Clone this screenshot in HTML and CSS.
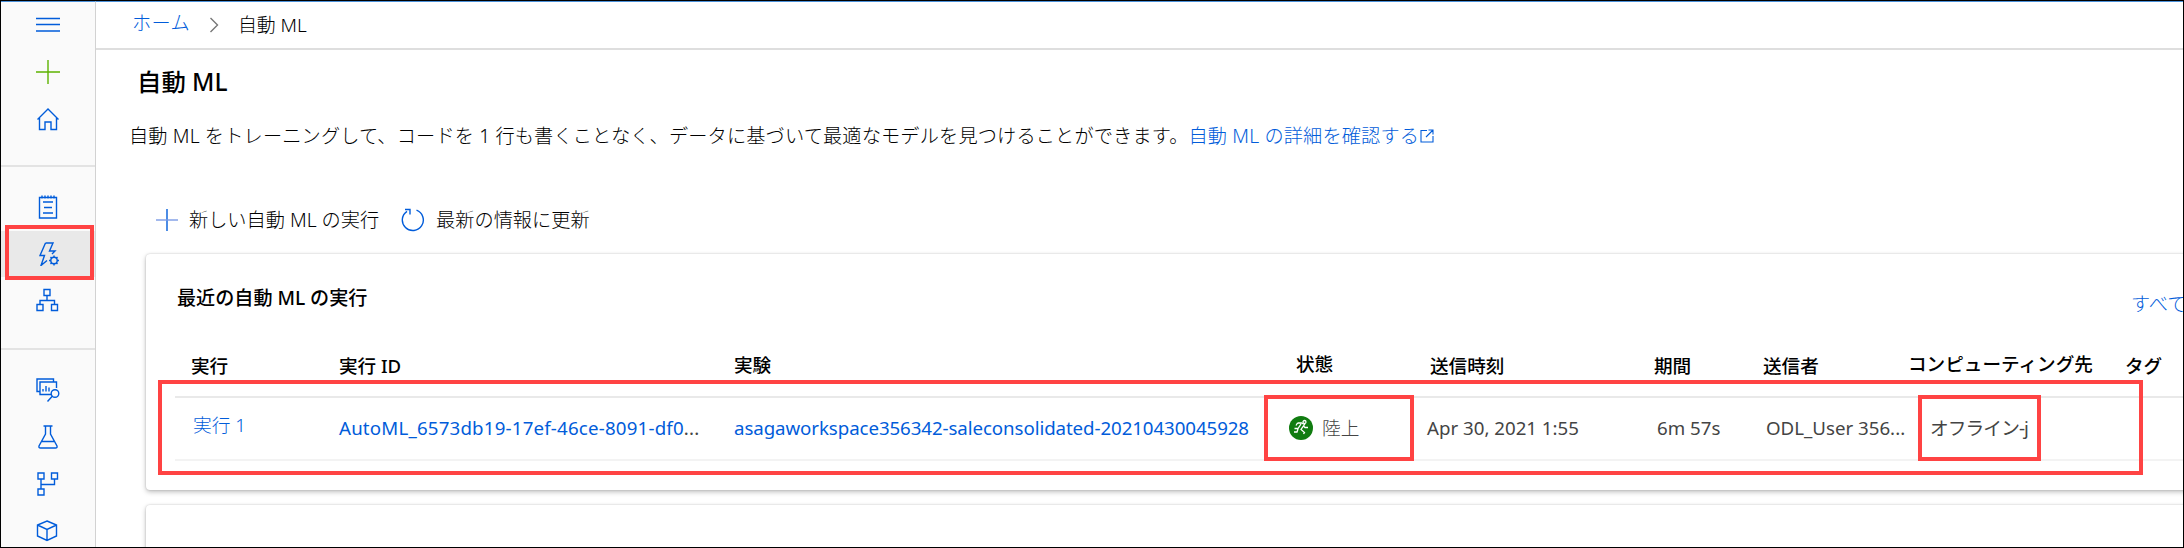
FILE: index.html
```html
<!DOCTYPE html>
<html lang="ja">
<head>
<meta charset="utf-8">
<title>自動 ML</title>
<link rel="stylesheet" href="styles.css">
</head>
<body>
<div class="app">
  <nav class="sidebar">
    <div class="nav-group nav-top">
      <a class="nav-item"><svg width="24" height="24" viewBox="0 0 24 24"><path d="M0 5.500h24M0 11.500h24M0 18h24"/></svg></a>
      <a class="nav-item add"><svg width="24" height="24" viewBox="0 0 24 24"><path d="M0 12h24M12 0v24"/></svg></a>
      <a class="nav-item"><svg width="24" height="24" viewBox="0 0 24 24"><path d="M1.500 12.500 12 2l10.500 10.500M3.500 11v11.500h5.500v-7.500h6v7.500h5.500V11"/></svg></a>
    </div>
    <div class="nav-group nav-author">
      <a class="nav-item"><svg width="24" height="24" viewBox="0 0 24 24"><path d="M3.500 2.500h17v20.500h-17zM7 7h10M8 12.500h8M7 18h10M6 .5v3M9 .5v3M12 .5v3M15 .5v3M18 .5v3"/></svg></a>
      <a class="nav-item selected"><svg width="24" height="24" viewBox="0 0 24 24"><path d="M9.500 1H17l-3.500 8H19l-3 3M9.500 1 4 13.500h4.500L5 23.500l6-5"/><circle cx="18" cy="18.500" r="3.200"/><path d="M18 13.500v2M18 21.500v2M13 18.500h2M21 18.500h2M14.500 15l1.300 1.300M20.200 20.700l1.300 1.300M21.500 15l-1.300 1.300M15.800 20.700 14.500 22"/></svg></a>
      <a class="nav-item"><svg width="24" height="24" viewBox="0 0 24 24"><path d="M8 1.500h6v6H8zM1 16.500h6v6H1zM15.500 16.500h6v6h-6zM11 7.500v5M4 16.500v-4h14.500v4"/></svg></a>
    </div>
    <div class="nav-group nav-assets">
      <a class="nav-item"><svg width="24" height="24" viewBox="0 0 24 24"><path d="M4 13.500H1V1h16.500v2.500M15 16.500H4V4h16.500v6M7 13.500V11M10 13.500V8M13 13.500V9.500M11.500 23.500l5-5.500"/><circle cx="19" cy="15.500" r="3.800"/></svg></a>
      <a class="nav-item"><svg width="24" height="24" viewBox="0 0 24 24"><path d="M7.500 1h9M9.500 1v8L3 21q-.500 2 1.500 2h15q2 0 1.500-2L14.500 9V1M6 16.500h12"/></svg></a>
      <a class="nav-item"><svg width="24" height="24" viewBox="0 0 24 24"><path d="M2 1h6v6H2zM15.500 1h6v6h-6zM2 17h6v6H2zM5 7v10M5 12.500h13.500V7"/></svg></a>
      <a class="nav-item"><svg width="24" height="24" viewBox="0 0 24 24"><path d="M11 2 20.500 6v11L11 21.500 1.500 17V6zM1.500 6 11 10.500 20.500 6M11 10.500v11"/></svg></a>
    </div>
  </nav>
  <main class="main">
    <header class="breadcrumb">
      <a class="crumb-link">ホーム</a>
      <svg class="chevron" width="10" height="16" viewBox="0 0 10 16"><path d="M1.500 1 8.500 8l-7 7"/></svg>
      <span class="crumb-current">自動 ML</span>
    </header>
    <h1 class="title">自動 ML</h1>
    <p class="description"><span class="desc-text">自動 ML をトレーニングして、コードを 1 行も書くことなく、データに基づいて最適なモデルを見つけることができます。</span><a class="desc-link">自動 ML の詳細を確認する</a><svg width="14" height="14" viewBox="0 0 14 14"><path d="M7 1.500H1v11.500h12V7M8.500 1H13v4.500M13 1 6 8"/></svg></p>
    <div class="toolbar">
      <button class="tool new-run"><svg width="22" height="22" viewBox="0 0 22 22"><path d="M11 0v22"/><path class="soft" d="M0 11h22"/></svg>新しい自動 ML の実行</button>
      <button class="tool refresh"><svg width="24" height="24" viewBox="0 0 24 24"><path d="M15.500 2.200A10.500 10.500 0 1 1 6 3.300M4 1.500h5v5"/></svg>最新の情報に更新</button>
    </div>
    <section class="card runs">
      <div class="card-head"><h2>最近の自動 ML の実行</h2><a class="view-all">すべて</a></div>
      <div class="grid head">
        <span>実行</span><span>実行 ID</span><span class="up">実験</span><span class="state-head">状態</span><span class="time-head">送信時刻</span><span class="time-head">期間</span><span>送信者</span><span class="up2">コンピューティング先</span><span>タグ</span>
      </div>
      <div class="grid row">
        <a class="run-name">実行 1</a>
        <a class="run-id">AutoML_6573db19-17ef-46ce-8091-df0<i>...</i></a>
        <a class="experiment">asagaworkspace356342-saleconsolidated-20210430045928</a>
        <span class="status"><svg width="24" height="24" viewBox="0 0 24 24"><circle cx="12" cy="12" r="12"/><path d="M8.500 7h4l3 1.500-3.500 5 3.500 3-1 1.500M12 8l-3 4.500H5.500M14.500 10l1.500 1.500h3M9 13l-1 3H5M8.500 7 7 9.500"/><circle class="runner-head" cx="15.500" cy="6" r="1.500"/></svg>陸上</span>
        <span class="submitted">Apr 30, 2021 1:55</span>
        <span class="duration">6m 57s</span>
        <span class="user">ODL_User 356...</span>
        <span class="target">オフライン-j</span>
      </div>
    </section>
    <section class="card"></section>
  </main>
  <div class="callout nav-callout"></div>
  <div class="callout row-callout"></div>
  <div class="callout status-callout"></div>
  <div class="callout target-callout"></div>
</div>
</body>
</html>
```

FILE: styles.css
```css
* { box-sizing: border-box; }
body {
  margin: 0;
  font-family: "Noto Sans", "Noto Sans CJK JP", sans-serif;
  font-size: 19.2px;
  font-weight: 300;
  color: #000;
  background: #fff;
}
.app {
  position: relative;
  display: flex;
  width: 2184px;
  height: 548px;
  border: 1px solid #000;
  overflow: hidden;
}
.app a, .view-all { color: #015cda; text-decoration: none; }
svg { flex: none; fill: none; stroke: #015cda; stroke-width: 1.4; }

.sidebar {
  width: 95px;
  flex: none;
  background: #fafafa;
  border-right: 1px solid #d2d2d2;
  border-top: 1px solid #4a90d9;
}
.nav-group { border-bottom: 2px solid #e3e3e3; }
.nav-group:last-child { border-bottom: 0; }
.nav-item {
  display: flex;
  align-items: center;
  justify-content: center;
  height: 47px;
}
.nav-top { height: 165px; }
.nav-top .nav-item { height: 47.5px; }
.nav-top .nav-item:first-child { height: 46px; }
.nav-author { height: 183px; padding-top: 17px; }
.nav-author .nav-item { height: 46.5px; }
.nav-assets { padding-top: 16px; }
.add svg { stroke: #5db300; }
.selected { background: #e9e9e9; }

.main { flex: 1; min-width: 0; border-top: 1px solid #4a90d9; }
.breadcrumb {
  display: flex;
  align-items: center;
  height: 48px;
  padding: 0 0 3px 36px;
  border-bottom: 2px solid #dedede;
  line-height: 24px;
}
.crumb-link { margin-top: -2px; letter-spacing: .3px; }
.chevron { margin: 2px 19px 0 19px; stroke: #777; }
.crumb-current { padding-top: 3px; font-size: 18.9px; }
.title {
  margin: 17px 0 0 41px;
  font-size: 24.4px;
  font-weight: 500;
  line-height: 30px;
}
.description {
  display: flex;
  align-items: center;
  margin: 26px 0 0 33px;
  letter-spacing: .15px;
  line-height: 26px;
  white-space: nowrap;
}
.description svg { margin-left: 1px; stroke-width: 1.1; }
.toolbar { display: flex; margin: 58px 0 21px 60px; height: 26px; }
.tool {
  display: flex;
  align-items: center;
  gap: 11px;
  padding: 0;
  border: 0;
  background: none;
  font: inherit;
  line-height: 26px;
  white-space: nowrap;
}
.refresh { margin-left: 22px; }
.soft { stroke: #7b9be6; }

.card {
  width: 2100px;
  height: 236px;
  margin: 0 0 15px 50px;
  border-radius: 4px;
  background: #fff;
  box-shadow: 0 2px 5px rgba(0,0,0,.25), 0 0 2px rgba(0,0,0,.18);
}
.card-head {
  display: flex;
  justify-content: space-between;
  padding: 31px 0 0 31px;
  height: 96px;
  white-space: nowrap;
}
.card-head h2 { margin: 0; font-size: 19.1px; font-weight: 500; line-height: 26px; }
.view-all { width: 115px; padding-top: 6px; line-height: 26px; }
.grid {
  display: grid;
  grid-template-columns: 148px 395px 555px 140px 224px 110px 145px 217px 80px;
  align-items: start;
  margin-left: 29px;
  white-space: nowrap;
}
.head {
  height: 48px;
  padding: 3px 0 0 16px;
  border-bottom: 2px solid #e9e9e9;
  font-size: 18.6px;
  font-weight: 500;
  line-height: 26px;
}
.head .up { margin-top: -1px; }
.head .up2 { margin-top: -2px; }
.state-head { margin: -2px 0 0 7px; }
.time-head { margin-left: 1px; }
.row {
  height: 63px;
  padding: 17px 0 0 16px;
  border-bottom: 2px solid #f3f3f3;
  color: #444;
  font-size: 18.7px;
  font-weight: 400;
  line-height: 26px;
}
.row i { font-style: normal; color: #444; }
.run-name { margin: -3px 0 0 2px; font-weight: 300; }
.run-id { letter-spacing: .19px; }
.experiment { letter-spacing: -.08px; }
.status { display: flex; align-items: center; gap: 9px; font-weight: 300; }
.status svg { stroke: #fff; stroke-width: 1.3; }
.status circle { fill: #107c10; stroke: none; }
.status .runner-head { stroke: #fff; }
.submitted { margin-left: -2px; }
.duration { margin-left: 4px; }
.user { margin-left: 3px; }
.target { margin-left: 22px; letter-spacing: -.9px; }

/* Highlight frames drawn over the page */
.callout { position: absolute; border: 4px solid #ff4343; }
.nav-callout { left: 4px; top: 224px; width: 89px; height: 55px; }
.row-callout { left: 157px; top: 379px; width: 1985px; height: 95px; }
.status-callout { left: 1263px; top: 394px; width: 150px; height: 66px; }
.target-callout { left: 1917px; top: 394px; width: 123px; height: 66px; }
```
